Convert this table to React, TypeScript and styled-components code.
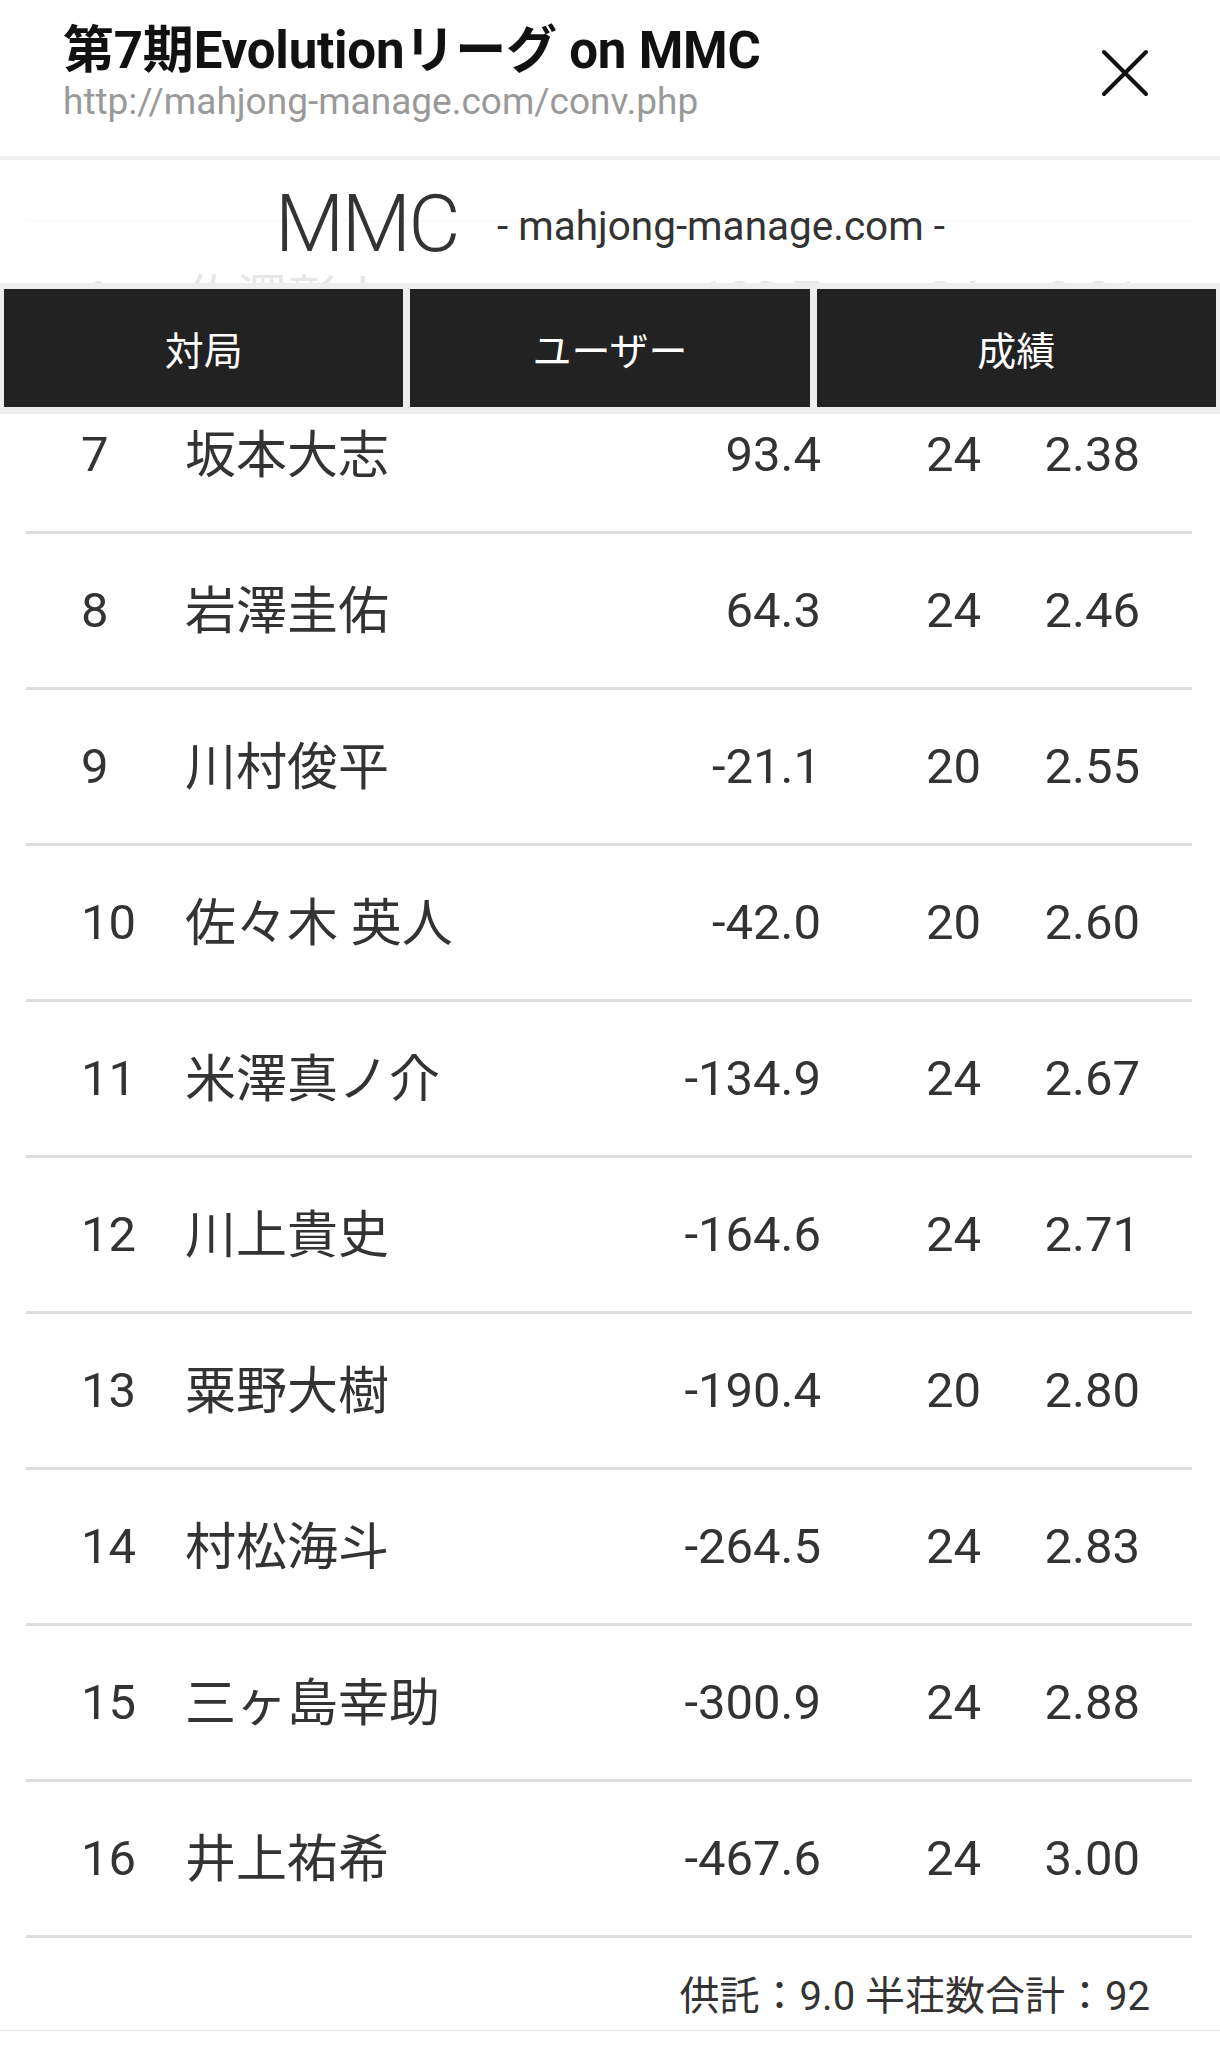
import React from "react";
import styled, { createGlobalStyle } from "styled-components";

const GlobalStyle = createGlobalStyle`
  html, body {
    margin: 0;
    padding: 0;
    background: #fff;
  }
  body {
    font-family: Roboto, "Noto Sans CJK JP", sans-serif;
    color: #333;
  }
`;

const Page = styled.div`
  width: 1220px;
  min-height: 2048px;
  background: #fff;
`;

const Header = styled.header`
  display: flex;
  align-items: flex-start;
  justify-content: space-between;
  height: 160px;
  box-sizing: border-box;
  padding: 23px 71px 0 63px;
  border-bottom: 4px solid #eee;
`;

const TitleBlock = styled.div`
  display: flex;
  flex-direction: column;
  gap: 1px;
`;

const Title = styled.h1`
  margin: 0;
  font-family: Roboto, "Noto Sans CJK JP", sans-serif;
  font-size: 51px;
  line-height: 56px;
  font-weight: 700;
  color: #111;
  letter-spacing: -0.2px;
`;

const Url = styled.div`
  font-size: 37px;
  line-height: 44px;
  color: #999;
`;

const CloseButton = styled.button`
  border: 0;
  background: none;
  padding: 0;
  margin-top: 26px;
  width: 48px;
  height: 48px;
  display: flex;
  cursor: pointer;
`;

const Content = styled.main`
  position: relative;
  padding-top: 59px;
`;

const LogoBar = styled.div`
  position: absolute;
  z-index: 1;
  top: 0;
  left: 0;
  right: 0;
  height: 123px;
  box-sizing: border-box;
  padding-top: 4px;
  background: rgba(255, 255, 255, 0.88);
  display: flex;
  align-items: center;
  justify-content: center;
  gap: 39px;
`;

const LogoMark = styled.span`
  font-size: 80px;
  font-weight: 300;
  line-height: 1;
  color: #333;
  letter-spacing: -2.5px;
`;

const LogoDomain = styled.span`
  font-size: 40.5px;
  line-height: 1;
  color: #333;
  padding-top: 6px;
`;

const TabBar = styled.nav`
  position: absolute;
  z-index: 1;
  top: 123px;
  left: 0;
  right: 0;
  height: 131px;
  box-sizing: border-box;
  padding: 6px 4px 7px;
  background: #eee;
  display: grid;
  grid-template-columns: repeat(3, 1fr);
  gap: 7px;
`;

const Tab = styled.button`
  background: #222;
  color: #fff;
  border: 0;
  margin: 0;
  padding: 0;
  font-family: "Noto Sans CJK JP", sans-serif;
  font-size: 39px;
  display: flex;
  align-items: center;
  justify-content: center;
  cursor: pointer;
`;

const Table = styled.div`
  margin: 0 28px 0 26px;
  border-top: 3px solid #ddd;
`;

const Row = styled.div`
  display: grid;
  grid-template-columns: 104px 1fr 200px 160px 159px;
  align-items: center;
  height: 153px;
  padding: 0 52px 0 55px;
  border-bottom: 3px solid #ddd;
  font-size: 49px;
  color: #333;
`;

const Cell = styled.span<{ $align?: "left" | "right"; $cjk?: boolean }>`
  text-align: ${(p) => p.$align ?? "left"};
  font-size: ${(p) => (p.$cjk ? "51px" : "inherit")};
  padding-bottom: ${(p) => (p.$cjk ? "7px" : "0")};
  white-space: nowrap;
`;

const Footer = styled.footer`
  padding: 36px 70px 10px;
  text-align: right;
  font-size: 40px;
  line-height: 46px;
  color: #333;
  border-bottom: 1px solid #e0e0e0;
`;

type Player = {
  rank: number;
  name: string;
  score: string;
  games: number;
  avg: string;
};

const players: Player[] = [
  { rank: 6, name: "佐澤彰人", score: "103.7", games: 24, avg: "2.31" },
  { rank: 7, name: "坂本大志", score: "93.4", games: 24, avg: "2.38" },
  { rank: 8, name: "岩澤圭佑", score: "64.3", games: 24, avg: "2.46" },
  { rank: 9, name: "川村俊平", score: "-21.1", games: 20, avg: "2.55" },
  { rank: 10, name: "佐々木 英人", score: "-42.0", games: 20, avg: "2.60" },
  { rank: 11, name: "米澤真ノ介", score: "-134.9", games: 24, avg: "2.67" },
  { rank: 12, name: "川上貴史", score: "-164.6", games: 24, avg: "2.71" },
  { rank: 13, name: "粟野大樹", score: "-190.4", games: 20, avg: "2.80" },
  { rank: 14, name: "村松海斗", score: "-264.5", games: 24, avg: "2.83" },
  { rank: 15, name: "三ヶ島幸助", score: "-300.9", games: 24, avg: "2.88" },
  { rank: 16, name: "井上祐希", score: "-467.6", games: 24, avg: "3.00" },
];

const CloseIcon = () => (
  <svg width="48" height="48" viewBox="0 0 48 48" aria-hidden="true">
    <path
      d="M3 3 L45 45 M45 3 L3 45"
      stroke="#111"
      strokeWidth="4"
      strokeLinecap="round"
      fill="none"
    />
  </svg>
);

export default function App() {
  return (
    <Page>
      <GlobalStyle />
      <Header>
        <TitleBlock>
          <Title>第7期Evolutionリーグ on MMC</Title>
          <Url>http://mahjong-manage.com/conv.php</Url>
        </TitleBlock>
        <CloseButton aria-label="閉じる">
          <CloseIcon />
        </CloseButton>
      </Header>
      <Content>
        <LogoBar>
          <LogoMark>MMC</LogoMark>
          <LogoDomain>- mahjong-manage.com -</LogoDomain>
        </LogoBar>
        <TabBar>
          <Tab>対局</Tab>
          <Tab>ユーザー</Tab>
          <Tab>成績</Tab>
        </TabBar>
        <Table>
          {players.map((p) => (
            <Row key={p.rank}>
              <Cell>{p.rank}</Cell>
              <Cell $cjk>{p.name}</Cell>
              <Cell $align="right">{p.score}</Cell>
              <Cell $align="right">{p.games}</Cell>
              <Cell $align="right">{p.avg}</Cell>
            </Row>
          ))}
        </Table>
        <Footer>供託：9.0 半荘数合計：92</Footer>
      </Content>
    </Page>
  );
}
